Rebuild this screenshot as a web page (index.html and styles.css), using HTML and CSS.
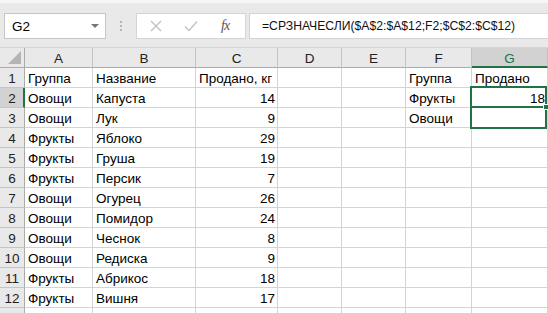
FILE: index.html
```html
<!DOCTYPE html>
<html>
<head>
<meta charset="utf-8">
<link rel="stylesheet" href="styles.css">
</head>
<body>
<div class="app">
  <div class="toolbar">
    <div class="namebox"><span class="nb-text">G2</span><span class="nb-arrow"></span></div>
    <div class="grip"><i></i><i></i><i></i></div>
    <div class="fxbox">
      <svg class="ico" width="14" height="14" viewBox="0 0 14 14"><path d="M2 2 L12 12 M12 2 L2 12" stroke="#c3c3c3" stroke-width="1.4" fill="none"/></svg>
      <svg class="ico" width="16" height="14" viewBox="0 0 16 14"><path d="M2 7.5 L6 11.5 L14 2.5" stroke="#c3c3c3" stroke-width="1.5" fill="none"/></svg>
      <span class="fx">fx</span>
    </div>
    <div class="formula">=СРЗНАЧЕСЛИ($A$2:$A$12;F2;$C$2:$C$12)</div>
  </div>
  <div class="sheet">
    <div class="grid">
      <div class="corner"><span class="tri"></span></div>
      <div class="ch">A</div><div class="ch">B</div><div class="ch">C</div><div class="ch">D</div><div class="ch">E</div><div class="ch">F</div><div class="ch sel">G</div>

      <div class="rh">1</div><div class="c">Группа</div><div class="c">Название</div><div class="c">Продано, кг</div><div class="c"></div><div class="c"></div><div class="c">Группа</div><div class="c">Продано</div>
      <div class="rh sel">2</div><div class="c">Овощи</div><div class="c">Капуста</div><div class="c n">14</div><div class="c"></div><div class="c"></div><div class="c">Фрукты</div><div class="c n">18</div>
      <div class="rh">3</div><div class="c">Овощи</div><div class="c">Лук</div><div class="c n">9</div><div class="c"></div><div class="c"></div><div class="c">Овощи</div><div class="c"></div>
      <div class="rh">4</div><div class="c">Фрукты</div><div class="c">Яблоко</div><div class="c n">29</div><div class="c"></div><div class="c"></div><div class="c"></div><div class="c"></div>
      <div class="rh">5</div><div class="c">Фрукты</div><div class="c">Груша</div><div class="c n">19</div><div class="c"></div><div class="c"></div><div class="c"></div><div class="c"></div>
      <div class="rh">6</div><div class="c">Фрукты</div><div class="c">Персик</div><div class="c n">7</div><div class="c"></div><div class="c"></div><div class="c"></div><div class="c"></div>
      <div class="rh">7</div><div class="c">Овощи</div><div class="c">Огурец</div><div class="c n">26</div><div class="c"></div><div class="c"></div><div class="c"></div><div class="c"></div>
      <div class="rh">8</div><div class="c">Овощи</div><div class="c">Помидор</div><div class="c n">24</div><div class="c"></div><div class="c"></div><div class="c"></div><div class="c"></div>
      <div class="rh">9</div><div class="c">Овощи</div><div class="c">Чеснок</div><div class="c n">8</div><div class="c"></div><div class="c"></div><div class="c"></div><div class="c"></div>
      <div class="rh">10</div><div class="c">Овощи</div><div class="c">Редиска</div><div class="c n">9</div><div class="c"></div><div class="c"></div><div class="c"></div><div class="c"></div>
      <div class="rh">11</div><div class="c">Фрукты</div><div class="c">Абрикос</div><div class="c n">18</div><div class="c"></div><div class="c"></div><div class="c"></div><div class="c"></div>
      <div class="rh">12</div><div class="c">Фрукты</div><div class="c">Вишня</div><div class="c n">17</div><div class="c"></div><div class="c"></div><div class="c"></div><div class="c"></div>
      <div class="rh"></div><div class="c"></div><div class="c"></div><div class="c"></div><div class="c"></div><div class="c"></div><div class="c"></div><div class="c"></div>
    </div>
    <div class="selection"><span class="mid"></span><span class="handle"></span></div>
  </div>
</div>
</body>
</html>
```

FILE: styles.css
```css
* { box-sizing: border-box; }
html, body { margin: 0; padding: 0; }
body {
  width: 548px;
  height: 313px;
  overflow: hidden;
  background: #fff;
  font-family: "Liberation Sans", Arial, sans-serif;
  color: #000;
}
.app { display: flex; flex-direction: column; height: 313px; }

.toolbar {
  height: 48px;
  flex: none;
  background: #e9e9e9;
  border-top: 3px solid #f6f6f6;
  border-bottom: 1px solid #d5d5d5;
  display: flex;
  align-items: flex-start;
  padding: 10px 0 0 4px;
}
.namebox {
  width: 102px;
  height: 26px;
  background: #fff;
  border: 1px solid #c6c6c6;
  display: flex;
  align-items: center;
  justify-content: space-between;
  padding: 0 6px 0 7px;
  font-size: 13.5px;
}
.nb-arrow {
  width: 0; height: 0;
  border-left: 4px solid transparent;
  border-right: 4px solid transparent;
  border-top: 4px solid #777;
}
.grip {
  width: 30px;
  height: 26px;
  display: flex;
  flex-direction: column;
  align-items: center;
  justify-content: center;
  gap: 2px;
}
.grip i { display: block; width: 2px; height: 2px; background: #b5b5b5; }
.fxbox {
  width: 110px;
  height: 26px;
  background: #fff;
  border: 1px solid #d4d4d4;
  display: flex;
  align-items: center;
  padding-left: 12px;
}
.fxbox .ico:first-child { margin-right: 20px; }
.fxbox .ico:nth-child(2) { margin-right: 22px; }
.fx {
  font-family: "Liberation Serif", serif;
  font-style: italic;
  font-size: 14px;
  color: #555;
  letter-spacing: -1px;
}
.formula {
  flex: 1;
  margin-left: 3px;
  height: 26px;
  background: #fff;
  border: 1px solid #d4d4d4;
  border-right: none;
  font-size: 12.2px;
  line-height: 24px;
  padding-left: 12px;
  white-space: nowrap;
  color: #111;
}

.sheet { position: relative; flex: 1; overflow: hidden; }
.grid {
  display: grid;
  grid-template-columns: 25px 68px 103px 82px 64px 64px 66px 76px;
  grid-auto-rows: 20px;
  grid-template-rows: 20px;
}
.corner {
  background: #e9e9e9;
  border-right: 1px solid #ababab;
  border-bottom: 1px solid #ababab;
  position: relative;
}
.tri {
  position: absolute;
  right: 3px;
  bottom: 3px;
  width: 0; height: 0;
  border-left: 13px solid transparent;
  border-bottom: 13px solid #b4b4b4;
}
.ch {
  background: #e9e9e9;
  border-right: 1px solid #c4c4c4;
  border-bottom: 1px solid #ababab;
  text-align: center;
  font-size: 13.5px;
  line-height: 21px;
  color: #222;
}
.ch.sel {
  background: #d2d2d2;
  color: #217346;
  border-bottom: 2px solid #217346;
}
.rh {
  background: #e9e9e9;
  border-right: 1px solid #ababab;
  border-bottom: 1px solid #c4c4c4;
  text-align: center;
  font-size: 13.5px;
  line-height: 22px;
  color: #222;
}
.rh.sel {
  background: #d2d2d2;
  border-right: 2px solid #217346;
  padding-left: 1px;
}
.c {
  border-right: 1px solid #d4d4d4;
  border-bottom: 1px solid #d4d4d4;
  font-size: 13.5px;
  line-height: 22px;
  padding: 0 3px;
  white-space: nowrap;
  overflow: hidden;
}
.c.n { text-align: right; padding-right: 2px; }

.selection {
  position: absolute;
  left: 470px;
  top: 38px;
  width: 77px;
  height: 43px;
  border: 2px solid #217346;
}
.selection .mid {
  position: absolute;
  left: 0; right: 0;
  top: 18px;
  height: 2px;
  background: #217346;
}
.selection .handle {
  position: absolute;
  right: -4px;
  top: 16px;
  width: 6px;
  height: 6px;
  background: #217346;
  border: 1px solid #fff;
}
```
